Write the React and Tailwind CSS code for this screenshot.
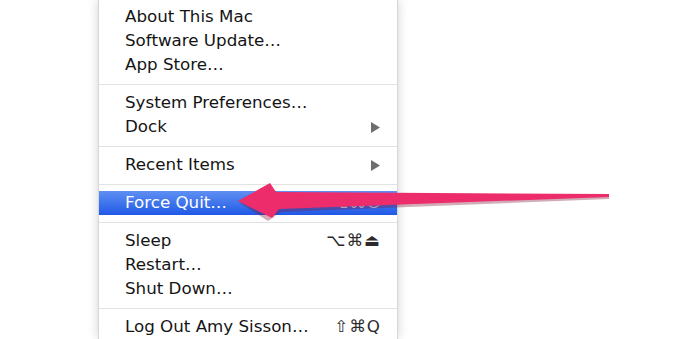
import React from 'react';

// Apple menu with the Force Quit item highlighted and an arrow pointing at it
const groups = [
  [
    { label: 'About This Mac' },
    { label: 'Software Update…' },
    { label: 'App Store…' },
  ],
  [
    { label: 'System Preferences…' },
    { label: 'Dock', submenu: true },
  ],
  [{ label: 'Recent Items', submenu: true }],
  [{ label: 'Force Quit…', shortcut: '⌥⌘⎋', active: true }],
  [
    { label: 'Sleep', shortcut: '⌥⌘⏏' },
    { label: 'Restart…' },
    { label: 'Shut Down…' },
  ],
  [{ label: 'Log Out Amy Sisson…', shortcut: '⇧⌘Q' }],
];

const MenuItem = ({ item }) => (
  <div
    className={`h-[24px] flex items-center justify-between pl-[26px] pr-[16px] ${
      item.active ? 'bg-gradient-to-b from-[#5f8ff2] to-[#2058e6] text-white' : 'text-[#141414]'
    }`}
  >
    <span>{item.label}</span>
    {item.submenu && (
      <svg width="9" height="11" viewBox="0 0 9 11" className="mr-[1px]">
        <path d="M0 0 L9 5.5 L0 11 Z" fill="#6e6e6e" />
      </svg>
    )}
    {item.shortcut && (
      <span className={`tracking-[1px] ${item.active ? 'text-[#dfe8ff]' : 'text-[#2a2a2a]'}`}>
        {item.shortcut}
      </span>
    )}
  </div>
);

const Separator = () => (
  <div className="h-[14px] flex items-center">
    <div className="h-px w-full bg-[#e2e2e2]" />
  </div>
);

export default function App() {
  return (
    <div className="relative w-[700px] h-[339px] overflow-hidden bg-white font-['DejaVu_Sans',sans-serif] text-[16.7px]">
      <div className="ml-[98px] w-[300px] h-[339px] pt-[5px] bg-white border-x border-[#d6d6d6] shadow-[0_0_10px_rgba(0,0,0,0.18)]">
        {groups.map((group, i) => (
          <React.Fragment key={i}>
            {i > 0 && <Separator />}
            {group.map((item) => (
              <MenuItem key={item.label} item={item} />
            ))}
          </React.Fragment>
        ))}
      </div>

      {/* pink arrow laid over the menu */}
      <svg
        className="absolute left-0 top-0 pointer-events-none"
        width="700"
        height="339"
        viewBox="0 0 700 339"
      >
        <path
          d="M240 203 L270 188 L281 194 L609 195 L609 199 L281 212 L268 221 Z"
          fill="#7a1434"
          opacity="0.35"
        />
        <path
          d="M238 201 L270 183 L276 192 L609 194 L609 197 L279 209 L272 218 Z"
          fill="#ec2c6b"
        />
      </svg>
    </div>
  );
}
